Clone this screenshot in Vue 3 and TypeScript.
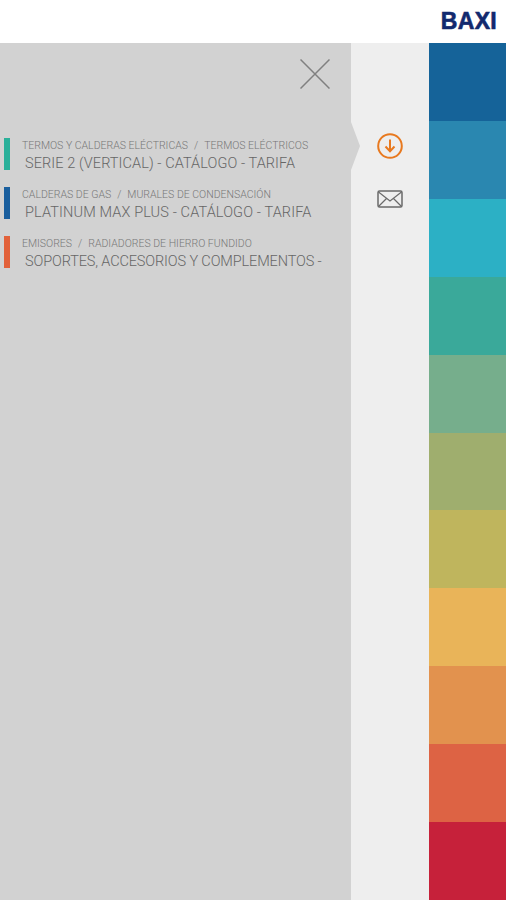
<template>
  <div class="screen">
    <header class="top-bar">
      <span class="logo">BAXI</span>
    </header>
    <div class="body">
      <main class="list-panel">
        <div class="close-row">
          <svg class="close-icon" width="30" height="30" viewBox="0 0 30 30">
            <path d="M0.5 0.5 L29.5 29.5 M29.5 0.5 L0.5 29.5" stroke="#808080" stroke-width="1.5" fill="none" />
          </svg>
        </div>
        <ul class="docs">
          <li v-for="doc in docs" :key="doc.title" class="doc">
            <span class="doc-bar" :style="{ background: doc.color }"></span>
            <div class="doc-text">
              <div class="doc-path">
                <span>{{ doc.category }}</span>
                <span class="sep">/</span>
                <span>{{ doc.sub }}</span>
              </div>
              <div class="doc-title" :style="{ letterSpacing: doc.tracking + 'px' }">{{ doc.title }}</div>
            </div>
          </li>
        </ul>
      </main>
      <aside class="actions">
        <span class="pointer"></span>
        <svg class="icon-download" width="28" height="28" viewBox="0 0 28 28">
          <circle cx="14" cy="14" r="11.8" stroke="#e8791f" stroke-width="2" fill="none" />
          <path d="M14 7.5 V19 M9.5 14.5 L14 19.2 L18.5 14.5" stroke="#e8791f" stroke-width="2" fill="none" />
        </svg>
        <svg class="icon-mail" width="26" height="18" viewBox="0 0 26 18">
          <rect x="1" y="1" width="24" height="16" rx="1.5" stroke="#6a6a6a" stroke-width="1.5" fill="none" />
          <path d="M1.5 2 L13 11 L24.5 2 M1.5 16.5 L9.5 8.5 M24.5 16.5 L16.5 8.5" stroke="#6a6a6a" stroke-width="1.2" fill="none" />
        </svg>
      </aside>
      <nav class="stripes">
        <div v-for="c in stripes" :key="c" class="stripe" :style="{ background: c }"></div>
      </nav>
    </div>
  </div>
</template>

<script setup lang="ts">
const docs = [
  {
    category: 'TERMOS Y CALDERAS ELÉCTRICAS',
    sub: 'TERMOS ELÉCTRICOS',
    title: 'SERIE 2 (VERTICAL) - CATÁLOGO - TARIFA',
    color: '#2bb09a',
    tracking: 0.08
  },
  {
    category: 'CALDERAS DE GAS',
    sub: 'MURALES DE CONDENSACIÓN',
    title: 'PLATINUM MAX PLUS - CATÁLOGO - TARIFA',
    color: '#1a5f9e',
    tracking: 0.13
  },
  {
    category: 'EMISORES',
    sub: 'RADIADORES DE HIERRO FUNDIDO',
    title: 'SOPORTES, ACCESORIOS Y COMPLEMENTOS -',
    color: '#e2613a',
    tracking: -0.13
  }
]

const stripes = [
  '#156399',
  '#2a87b0',
  '#2cb0c5',
  '#3aa99a',
  '#76ae8c',
  '#9fae6e',
  '#bfb55d',
  '#e9b459',
  '#e2924e',
  '#dd6344',
  '#c6213a'
]
</script>

<style scoped>
.screen {
  width: 506px;
  height: 900px;
  display: flex;
  flex-direction: column;
  overflow: hidden;
  background: #fff;
  font-family: Roboto, 'Liberation Sans', sans-serif;
}

.top-bar {
  height: 43px;
  flex: none;
  display: flex;
  align-items: center;
  justify-content: flex-end;
  padding-right: 9px;
  box-sizing: border-box;
  background: #fff;
}

.logo {
  font-family: 'Liberation Sans', Arial, sans-serif;
  font-weight: 700;
  font-size: 23px;
  line-height: 1;
  letter-spacing: 0.3px;
  color: #12296e;
  -webkit-text-stroke: 0.6px #12296e;
}

.body {
  flex: 1;
  display: flex;
  min-height: 0;
}

.list-panel {
  width: 351px;
  flex: none;
  background: #d2d2d2;
}

.close-row {
  display: flex;
  justify-content: flex-end;
  padding: 16px 21px 0 0;
}

.docs {
  list-style: none;
  margin: 49px 0 0;
  padding: 0 0 0 4px;
  display: flex;
  flex-direction: column;
  gap: 17px;
}

.doc {
  display: flex;
  height: 32px;
}

.doc-bar {
  width: 6px;
  flex: none;
}

.doc-text {
  padding-left: 12px;
  padding-top: 1px;
  white-space: nowrap;
}

.doc-path {
  font-size: 10.5px;
  line-height: 14px;
  font-weight: 300;
  color: #777;
  display: flex;
  gap: 6px;
}

.doc-title {
  font-size: 14.5px;
  line-height: 18px;
  font-weight: 300;
  padding-left: 3px;
  margin-top: 2px;
  color: #666;
}

.actions {
  position: relative;
  width: 78px;
  flex: none;
  background: #eeeeee;
  display: flex;
  flex-direction: column;
  align-items: center;
  padding-top: 89px;
  gap: 30px;
  box-sizing: border-box;
}

.pointer {
  position: absolute;
  left: 0;
  top: 79px;
  width: 9px;
  height: 48px;
  background: #d2d2d2;
  clip-path: polygon(0 0, 100% 50%, 0 100%);
}

.stripes {
  flex: 1;
  display: flex;
  flex-direction: column;
}

.stripe {
  flex: 1;
}
</style>

<style>
html,
body {
  margin: 0;
  background: #fff;
}
</style>
